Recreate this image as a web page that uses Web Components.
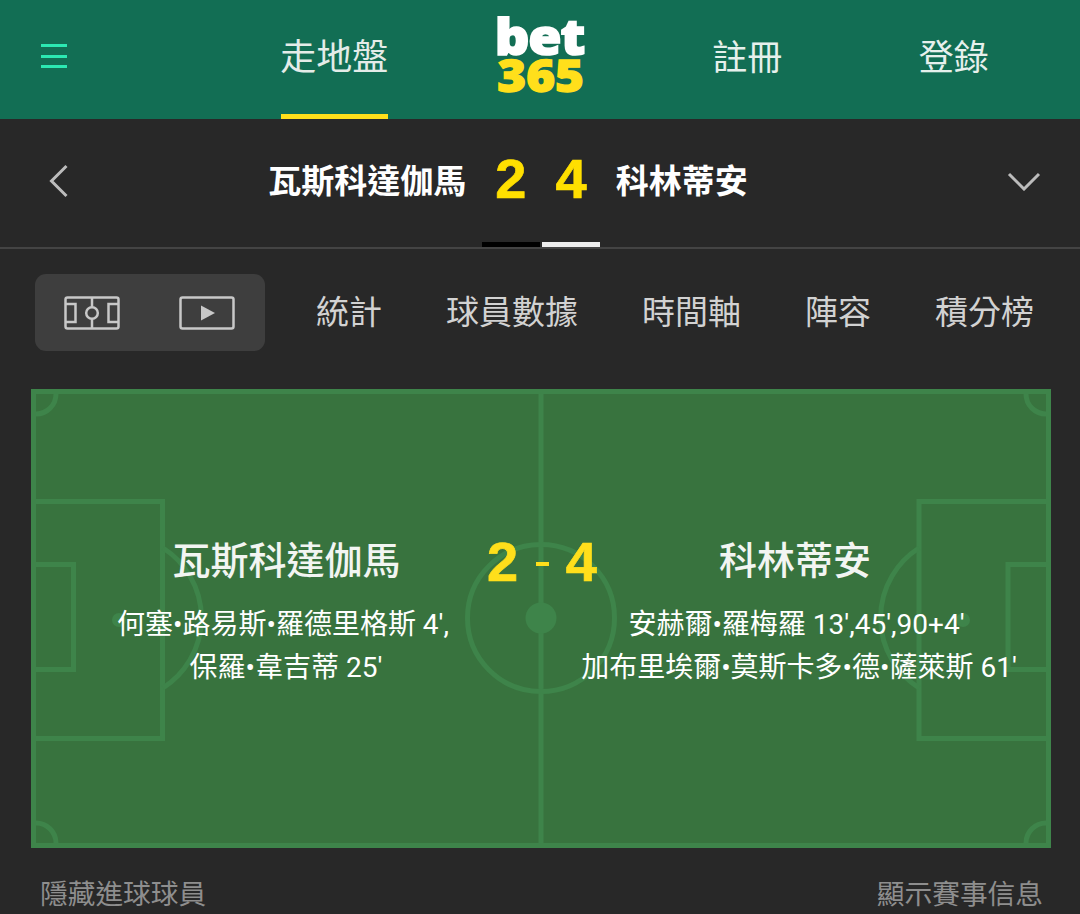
<!DOCTYPE html>
<html lang="zh-Hant"><head><meta charset="utf-8"><title>bet365</title>
<style>
html,body{margin:0;padding:0;background:#282828;overflow:hidden}
body{font-family:Roboto,"Noto Sans CJK TC",sans-serif;width:1080px;height:914px}
</style></head><body>
<app-header></app-header>
<score-bar home="瓦斯科達伽馬" away="科林蒂安" hs="2" as="4"></score-bar>
<match-tabs></match-tabs>
<pitch-panel></pitch-panel>
<panel-footer></panel-footer>
<script>
function def(name,html){customElements.define(name,class extends HTMLElement{constructor(){super();const r=this.attachShadow({mode:'open'});r.innerHTML=typeof html==='function'?html(this):html;}connectedCallback(){if(typeof html==='function')this.shadowRoot.innerHTML=html(this);}});}
def('app-header',`<style>
:host{display:grid;grid-template-columns:231px repeat(4,206.5px);height:119px;background:#126e54;color:#e6f0ec;font-size:35px;overflow:hidden}
.burger{display:flex;flex-direction:column;gap:7.5px;width:26px;margin:44px 0 0 41px}
.burger i{display:block;height:3px;background:#2ce8b2}
.cell{display:flex;justify-content:center;align-items:center;line-height:1;padding-top:2px;height:112px}
.cur{font-size:36px;border-bottom:5px solid #ffdf1b;width:107px;justify-self:center;white-space:nowrap;color:#e4ece8}
.logo{display:flex;flex-direction:column;align-items:center;font-family:"Open Sans",sans-serif;font-weight:800;line-height:1}
.logo span{display:block}
.bet{color:#fff;font-size:50px;letter-spacing:-1px;line-height:38px;margin:17px 0 0 -2px;-webkit-text-stroke:1.6px #fff;transform:scaleX(1.08)}
.n{color:#ffdf1b;font-size:44px;line-height:36px;margin-top:2px;-webkit-text-stroke:1.4px #ffdf1b;transform:scaleX(1.12)}
</style>
<div><div class="burger"><i></i><i></i><i></i></div></div>
<div class="cell cur"><span>走地盤</span></div>
<div class="logo"><span class="bet">bet</span><span class="n">365</span></div>
<div class="cell"><span>註冊</span></div>
<div class="cell"><span>登錄</span></div>`);
def('score-bar',h=>`<style>
:host{display:block;height:128px;border-bottom:2px solid #444;background:#282828;color:#fff}
.row{display:grid;grid-template-columns:1fr auto 1fr;column-gap:29px;height:123px;align-items:center}
.side{display:flex;align-items:center;font-size:33px;font-weight:700;white-space:nowrap;line-height:1;padding-top:2px}
.side svg{flex:none;margin-top:-2px}
.l svg{margin-left:49px;margin-right:auto}
.l span{margin-right:-2px}
.r svg{margin-left:auto;margin-right:39px}
.s{display:flex;gap:29px;margin-left:2px;margin-top:-4px;font:700 56px/1 "Liberation Sans",sans-serif;color:#ffdf00;-webkit-text-stroke:.7px #ffdf00}
.bars{display:flex;justify-content:center;gap:2px;padding-left:2px}
.bars i{display:block;width:58px;height:5px}
</style>
<div class="row">
<div class="side l"><svg width="20" height="34" viewBox="0 0 20 34"><path d="M17.500 2 L2.500 17 L17.500 32" fill="none" stroke="#bcbcbc" stroke-width="3"/></svg><span>${h.getAttribute('home')||''}</span></div>
<div class="s"><span>${h.getAttribute('hs')||''}</span><span>${h.getAttribute('as')||''}</span></div>
<div class="side r"><span>${h.getAttribute('away')||''}</span><svg width="34" height="20" viewBox="0 0 34 20"><path d="M2 3 L17 18 L32 3" fill="none" stroke="#bcbcbc" stroke-width="3"/></svg></div>
</div>
<div class="bars"><i style="background:#000"></i><i style="background:#eee"></i></div>`);
def('match-tabs',`<style>
:host{display:flex;align-items:center;height:140px;padding:25px 0 38px 35px;box-sizing:border-box;color:#d2d2d2;font-size:33px;white-space:nowrap;line-height:1}
.ctl{display:flex;width:230px;height:77px;background:#3e3e3e;border-radius:11px;align-items:center;flex:none;margin-right:51px}
.ctl svg{display:block;flex:none}
.a{margin-left:29px}.b{margin-left:59px}
.tabs{display:flex;gap:64px}
</style>
<div class="ctl">
<svg class="a" width="56" height="34" viewBox="0 0 56 34" fill="none" stroke="#c8c8c8" stroke-width="2.500"><rect x="1.500" y="1.500" width="53" height="31" rx="2"/><path d="M28 1.500V11M28 23V32.500"/><circle cx="28" cy="17" r="5.800"/><path d="M1.500 8H11.500V26H1.500M54.500 8H44.500V26H54.500"/></svg>
<svg class="b" width="56" height="34" viewBox="0 0 56 34" fill="none" stroke="#c8c8c8" stroke-width="2.500"><rect x="1.500" y="1.500" width="53" height="31" rx="2"/><path d="M22 9.500V24.500L36 17Z" fill="#c8c8c8" stroke="none"/></svg>
</div>
<div class="tabs"><span>統計</span><span>球員數據</span><span>時間軸</span><span>陣容</span><span>積分榜</span></div>`);
def('pitch-panel',`<style>
:host{display:grid;width:1020px;height:459px;margin-left:31px;background:#38733e;color:#fff;white-space:nowrap;overflow:hidden}
svg,.c{grid-area:1/1}
svg{display:block}
.c{display:grid;grid-template-columns:456px 110px 454px;align-items:center;padding-bottom:10px;box-sizing:border-box}
.t{display:flex;flex-direction:column;align-items:center;font-size:28px;line-height:43px}
.t b{font-size:38px;font-weight:500;line-height:44px;margin-bottom:20px;color:#f2f5f2}
.h{padding-left:48px;box-sizing:border-box}.w{padding-right:50px;box-sizing:border-box}
.h b{margin-left:7px}.w b{margin-right:8px}
.h span+span{margin-left:6px}
.w b+span{margin-right:5px}
.s{display:flex;justify-content:space-between;align-items:center;font:700 56px/1 "Liberation Sans",sans-serif;color:#ffdf1b;margin-top:-103px;-webkit-text-stroke:.7px #ffdf1b}
.s i{display:block;width:13px;height:4px;background:#ffdf1b;margin-top:3px}
</style>
<svg width="1020" height="459" viewBox="0 0 1020 459" fill="none" stroke="#3e844a" stroke-width="5">
<rect x="2.500" y="2.500" width="1015" height="454"/>
<path d="M510 0V459"/><circle cx="510" cy="229" r="73.500"/><circle cx="510" cy="229" r="15.500" fill="#3e844a" stroke="none"/>
<path d="M0 112.500H131.500V349.500H0M1020 112.500H888V349.500H1020"/>
<path d="M0 175.500H42.500V280.500H0M1020 175.500H977V280.500H1020"/>
<path d="M132 159A83 83 0 0 1 132 299M888 159A83 83 0 0 0 888 299"/>
<circle cx="88" cy="231" r="7" fill="#3e844a" stroke="none"/><circle cx="932" cy="231" r="7" fill="#3e844a" stroke="none"/>
<path d="M5 25A20 20 0 0 0 25 5M995 5A20 20 0 0 0 1015 25M5 434A20 20 0 0 1 25 454M995 454A20 20 0 0 1 1015 434"/>
</svg>
<div class="c">
<div class="t h"><b>瓦斯科達伽馬</b><span>何塞•路易斯•羅德里格斯 4',</span><span>保羅•韋吉蒂 25'</span></div>
<div class="s"><span>2</span><i></i><span>4</span></div>
<div class="t w"><b>科林蒂安</b><span>安赫爾•羅梅羅 13',45',90+4'</span><span>加布里埃爾•莫斯卡多•德•薩萊斯 61'</span></div>
</div>`);
def('panel-footer',`<style>
:host{display:flex;justify-content:space-between;padding:27px 37px 0 40px;color:#8e8e8e;font-size:27.700px;line-height:40px;white-space:nowrap}
</style><span>隱藏進球球員</span><span>顯示賽事信息</span>`);
</script>
</body></html>
